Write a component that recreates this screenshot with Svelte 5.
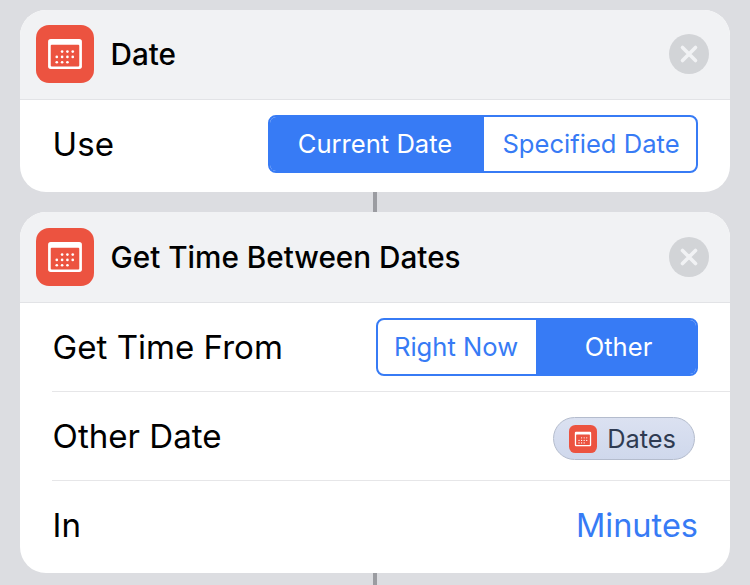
<script>
  // dots on the calendar glyph, 3 rows of 4 with two corners left out
  const calendarCells = [];
  for (let row = 0; row < 3; row++) {
    for (let col = 0; col < 4; col++) {
      if ((row === 0 && col === 0) || (row === 2 && col === 3)) continue;
      calendarCells.push({ x: 8.6 + col * 2.2, y: 11 + row * 2.2 });
    }
  }
</script>

{#snippet calendar(cls)}
  <svg class={cls} viewBox="0 0 24 24" aria-hidden="true">
    <rect width="24" height="24" rx="5.4" fill="#ec5340" />
    <rect x="5" y="5.8" width="14" height="12.4" rx="1.1" fill="#fff" />
    <rect x="6.1" y="8.2" width="11.8" height="9" rx="0.4" fill="#ec5340" />
    {#each calendarCells as c}
      <circle cx={c.x} cy={c.y} r="0.55" fill="#fff" />
    {/each}
  </svg>
{/snippet}

{#snippet closeButton()}
  <button class="close" aria-label="Remove action">
    <svg viewBox="0 0 40 40" aria-hidden="true">
      <path d="M13.5 13.5 26.5 26.5M26.5 13.5 13.5 26.5" stroke="#f1f2f4" stroke-width="3.6" stroke-linecap="round" />
    </svg>
  </button>
{/snippet}

<div class="page">
  <section class="card">
    <header class="head short">
      {@render calendar('icon')}
      <h2>Date</h2>
      {@render closeButton()}
    </header>
    <div class="row last-row">
      <span class="label">Use</span>
      <div class="segments">
        <span class="seg on use-a">Current Date</span>
        <span class="seg use-b">Specified Date</span>
      </div>
    </div>
  </section>

  <div class="link"></div>

  <section class="card">
    <header class="head">
      {@render calendar('icon')}
      <h2>Get Time Between Dates</h2>
      {@render closeButton()}
    </header>
    <div class="row">
      <span class="label">Get Time From</span>
      <div class="segments">
        <span class="seg from-a">Right Now</span>
        <span class="seg on from-b">Other</span>
      </div>
    </div>
    <div class="row">
      <span class="label">Other Date</span>
      <span class="token">
        {@render calendar('token-icon')}
        Dates
      </span>
    </div>
    <div class="row last-row">
      <span class="label">In</span>
      <span class="value">Minutes</span>
    </div>
  </section>

  <div class="link tail"></div>
</div>

<style>
  :global(body) {
    margin: 0;
    background: #dcdde1;
  }

  .page {
    width: 750px;
    height: 585px;
    overflow: hidden;
    box-sizing: border-box;
    padding: 10px 20px 0;
    font-family: Inter, "Liberation Sans", sans-serif;
    color: #000;
    background: #dcdde1;
  }

  .card {
    background: #fff;
    border-radius: 26px;
    overflow: hidden;
  }

  .head {
    height: 90px;
    display: flex;
    align-items: center;
    padding: 0 21px 0 16px;
    background: #f1f2f4;
    border-bottom: 1px solid #e2e3e6;
  }

  .head.short {
    height: 88px;
    padding-bottom: 1px;
  }

  .head h2 {
    flex: 1;
    margin: 0 0 0 16.5px;
    font-size: 29.7px;
    font-weight: 500;
  }

  :global(.icon) {
    width: 58px;
    height: 58px;
    flex-shrink: 0;
  }

  .close {
    width: 40px;
    height: 40px;
    padding: 0;
    border: none;
    border-radius: 50%;
    background: #d2d4d7;
  }

  .close svg {
    display: block;
  }

  .row {
    height: 88px;
    margin-left: 32px;
    padding-right: 32px;
    display: flex;
    align-items: center;
    justify-content: space-between;
    border-bottom: 1px solid #e6e6e8;
  }

  .last-row {
    height: 88px;
    padding-bottom: 4px;
    border-bottom: none;
  }

  .label {
    padding-left: 0.6px;
    font-size: 33.1px;
  }

  .segments {
    display: flex;
    height: 58px;
    box-sizing: border-box;
    border: 2px solid #377bf5;
    border-radius: 8px;
    overflow: hidden;
  }

  .seg {
    display: flex;
    align-items: center;
    justify-content: center;
    box-sizing: border-box;
    padding-bottom: 2px;
    font-size: 25.6px;
    color: #377bf5;
  }

  .seg.on {
    background: #377bf5;
    color: #fff;
  }

  .use-a {
    width: 214px;
    padding-right: 4px;
  }

  .use-b {
    width: 212px;
    padding-left: 2px;
  }

  .from-a {
    width: 158px;
    padding-right: 2px;
  }

  .from-b {
    width: 160px;
    padding-left: 5px;
  }

  .token {
    display: flex;
    align-items: center;
    gap: 10px;
    height: 43px;
    box-sizing: border-box;
    padding: 0 18px 0 15px;
    margin: 5px 3px 0 0;
    font-size: 25.4px;
    color: #2f3b52;
    background: linear-gradient(#dbe1f1, #cfd8ec);
    border: 1px solid #b4bccd;
    border-radius: 22px;
  }

  :global(.token-icon) {
    width: 28px;
    height: 28px;
  }

  .value {
    font-size: 32.5px;
    color: #377bf5;
  }

  .link {
    width: 4px;
    height: 20px;
    margin-left: 353px;
    background: #9b9ca1;
  }

  .tail {
    height: 12px;
  }
</style>
